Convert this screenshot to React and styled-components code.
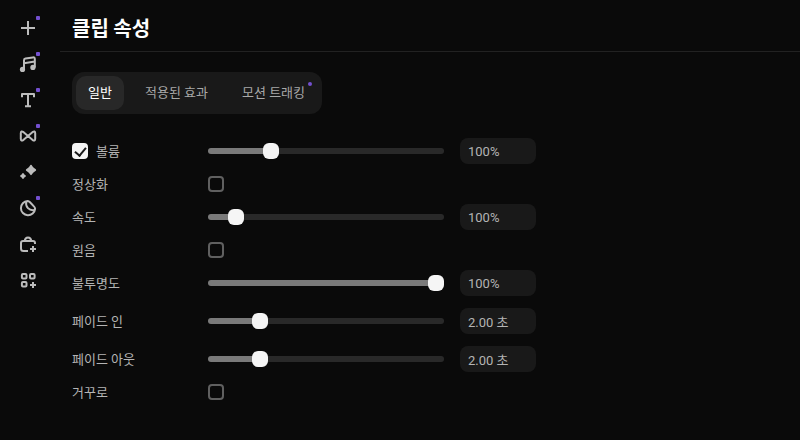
import { useState } from "react";
import styled, { createGlobalStyle } from "styled-components";

const GlobalStyle = createGlobalStyle`
	* {
		box-sizing: border-box;
	}
	body {
		margin: 0;
		background-color: #0a0a0a;
		color: #b4b4b4;
		font-family: Roboto, "Noto Sans CJK KR", sans-serif;
		font-size: 13px;
		line-height: 16px;
	}
	button,
	input {
		font: inherit;
		color: inherit;
	}
`;
const Page = styled.div`
	display: flex;
	min-height: 100vh;
`;
const Sidebar = styled.nav`
	display: flex;
	flex-direction: column;
	align-items: center;
	gap: 12px;
	flex: 0 0 60px;
	padding: 16px 4px 16px 0;
`;
const ToolButton = styled.button`
	position: relative;
	width: 24px;
	height: 24px;
	padding: 0;
	border: none;
	background: none;
	color: #bcbcbc;
	cursor: pointer;

	svg {
		display: block;
		width: 24px;
		height: 24px;
		fill: none;
		stroke: currentColor;
		stroke-width: 2;
		stroke-linejoin: round;
	}
	svg .solid {
		fill: currentColor;
		stroke: none;
	}
`;
const Dot = styled.span`
	position: absolute;
	top: ${(props) => props.$inset}px;
	right: ${(props) => props.$inset}px;
	width: 4px;
	height: 4px;
	border-radius: ${(props) => (props.$inset ? 2 : 1)}px;
	background-color: #7450d0;
`;
const Panel = styled.main`
	flex: 1;
	min-width: 0;
`;
const Header = styled.header`
	padding: 16px 12px 11px;
	border-bottom: 1px solid #222222;
`;
const Title = styled.h1`
	margin: 0;
	color: #ffffff;
	font-family: "Noto Sans CJK KR", sans-serif;
	font-size: 20px;
	font-weight: 700;
	line-height: 24px;
`;
const Content = styled.div`
	display: flex;
	flex-direction: column;
	align-items: flex-start;
	gap: 24px;
	padding: 20px 12px;
`;
const TabList = styled.div`
	display: flex;
	gap: 8px;
	padding: 4px;
	border-radius: 12px;
	background-color: #191919;
`;
const Tab = styled.button`
	position: relative;
	min-width: ${(props) => (props.$wide ? 89 : 48)}px;
	height: 34px;
	padding: 0 12px;
	border: none;
	border-radius: 10px;
	background-color: ${(props) => (props.$active ? "#282828" : "transparent")};
	color: ${(props) => (props.$active ? "#ffffff" : "#a8a8a8")};
	white-space: nowrap;
	cursor: pointer;
`;
const Rows = styled.div`
	display: flex;
	flex-direction: column;
	gap: 12px;
`;
const Row = styled.div`
	display: grid;
	grid-template-columns: 120px 236px 76px;
	align-items: center;
	column-gap: 16px;
`;
const LabelCell = styled.div`
	display: flex;
	align-items: center;
	gap: 8px;
	height: 16px;
`;
const Label = styled.label`
	padding-top: 2px;
`;
const Checkbox = styled.input`
	appearance: none;
	display: grid;
	place-items: center;
	width: 16px;
	height: 16px;
	margin: 0;
	border: 2px solid #606060;
	border-radius: 4px;
	cursor: pointer;

	&:checked {
		border-color: #f5f5f5;
		background-color: #f5f5f5;
	}
	&:checked::before {
		content: "";
		width: 5px;
		height: 9px;
		border-right: 2px solid #1a1a1a;
		border-bottom: 2px solid #1a1a1a;
		transform: translateY(-1px) rotate(40deg);
	}
`;
const Slider = styled.input`
	appearance: none;
	width: 100%;
	height: 16px;
	margin: 0;
	background: none;
	cursor: pointer;

	&::-webkit-slider-runnable-track {
		height: 6px;
		border-radius: 3px;
		background: linear-gradient(
			to right,
			#7a7a7a var(--fill),
			#292929 var(--fill)
		);
	}
	&::-webkit-slider-thumb {
		appearance: none;
		width: 16px;
		height: 16px;
		margin-top: -5px;
		border-radius: 6px;
		background-color: #f5f5f5;
	}
`;
const ValueBox = styled.input`
	width: 100%;
	height: 26px;
	padding: 0 8px;
	border: none;
	border-radius: 8px;
	background-color: #191919;
`;

const tools = [
	{
		name: "추가",
		dot: true,
		icon: <path d="M12 5v14M5 12h14" />,
	},
	{
		name: "음악",
		dot: true,
		icon: (
			<>
				<path d="M8 17.5V8.2Q8 6.6 9.5 6.4L16.8 5.4Q18.8 5.1 18.8 7V15.5M8 11.2L18.8 9.6" />
				<circle className="solid" cx="6.5" cy="17.4" r="2.6" />
				<circle className="solid" cx="16.9" cy="15.4" r="2.6" />
			</>
		),
	},
	{
		name: "텍스트",
		dot: true,
		icon: <path d="M6 9.2V6h12v3.2M12 6v12M9 18.2h6" />,
	},
	{
		name: "전환",
		dot: true,
		icon: (
			<path d="M12 12L7.6 8.2Q4.8 6.4 4.8 9.2V14.8Q4.8 17.6 7.6 15.8L16.4 8.2Q19.2 6.4 19.2 9.2V14.8Q19.2 17.6 16.4 15.8Z" />
		),
	},
	{
		name: "효과",
		dot: false,
		icon: (
			<>
				<path
					className="solid"
					d="M15 4.8Q15.6 4.8 16.4 6.2Q17.3 7.7 18.8 8.6Q20.2 9.4 20.2 10T18.8 11.4Q17.3 12.3 16.4 13.8Q15.6 15.2 15 15.2T13.6 13.8Q12.7 12.3 11.2 11.4Q9.8 10.6 9.8 10T11.2 8.6Q12.7 7.7 13.6 6.2Q14.4 4.8 15 4.8Z"
				/>
				<path
					className="solid"
					d="M7 13Q7.6 13 8 14Q8.4 14.6 9 15Q10 15.4 10 16T9 17Q8.4 17.4 8 18Q7.6 19 7 19T6 18Q5.6 17.4 5 17Q4 16.6 4 16T5 15Q5.6 14.6 6 14Q6.4 13 7 13Z"
				/>
			</>
		),
	},
	{
		name: "스티커",
		dot: true,
		icon: (
			<>
				<path d="M11.6 5A7.1 7.1 0 1 0 19.1 12.8Q19 11.5 17.9 10.4L14 6.3Q12.9 5.2 11.6 5Z" />
				<path d="M10.2 5.4C9.2 10.8 13 15.2 18.8 14.1" />
			</>
		),
	},
	{
		name: "스토어",
		dot: false,
		icon: (
			<>
				<path d="M12 19H7.5Q5 19 5 16.5V11Q5 9 7 9H17Q19 9 19 11V12" />
				<path d="M8.8 9Q9 5.4 12 5.4T15.2 9" />
				<path d="M17 14v6M14 17h6" />
			</>
		),
	},
	{
		name: "더보기",
		dot: false,
		icon: (
			<>
				<rect x="5.9" y="6" width="4.6" height="4.6" rx="1" />
				<rect x="14" y="6" width="4.6" height="4.6" rx="1" />
				<rect x="5.9" y="14" width="4.6" height="4.6" rx="1" />
				<path d="M17 14v6M14 17h6" />
			</>
		),
	},
];

const tabs = [
	{ label: "일반" },
	{ label: "적용된 효과", wide: true },
	{ label: "모션 트래킹", wide: true, dot: true },
];

const properties = [
	{ id: "volume", label: "볼륨", toggle: true, max: 400, level: 100, text: "100%" },
	{ id: "normalize", label: "정상화" },
	{ id: "speed", label: "속도", max: 1100, level: 100, text: "100%" },
	{ id: "pitch", label: "원음" },
	{ id: "opacity", label: "불투명도", max: 100, level: 100, text: "100%" },
	{ id: "fade-in", label: "페이드 인", max: 10, level: 2, text: "2.00 초" },
	{ id: "fade-out", label: "페이드 아웃", max: 10, level: 2, text: "2.00 초" },
	{ id: "reverse", label: "거꾸로" },
];

function SliderRow({ id, label, toggle, max, level, text }) {
	const [value, setValue] = useState(level);

	return (
		<Row>
			<LabelCell>
				{toggle && (
					<Checkbox
						type="checkbox"
						defaultChecked
						aria-labelledby={`${id}-label`}
					/>
				)}
				<Label id={`${id}-label`} htmlFor={id}>
					{label}
				</Label>
			</LabelCell>
			<Slider
				id={id}
				type="range"
				min="0"
				max={max}
				value={value}
				onChange={(e) => setValue(Number(e.target.value))}
				style={{ "--fill": `${(value / max) * 100}%` }}
			/>
			<ValueBox type="text" defaultValue={text} aria-labelledby={`${id}-label`} />
		</Row>
	);
}

function CheckRow({ id, label }) {
	return (
		<Row>
			<LabelCell>
				<Label htmlFor={id}>{label}</Label>
			</LabelCell>
			<Checkbox id={id} type="checkbox" />
		</Row>
	);
}

export default function App() {
	const [active, setActive] = useState(0);

	return (
		<>
			<GlobalStyle />
			<Page>
				<Sidebar>
					{tools.map((tool) => (
						<ToolButton key={tool.name} type="button" aria-label={tool.name}>
							<svg viewBox="0 0 24 24">{tool.icon}</svg>
							{tool.dot && <Dot $inset={0} />}
						</ToolButton>
					))}
				</Sidebar>
				<Panel>
					<Header>
						<Title>클립 속성</Title>
					</Header>
					<Content>
						<TabList role="tablist">
							{tabs.map((tab, i) => (
								<Tab
									key={tab.label}
									type="button"
									role="tab"
									aria-selected={i === active}
									$active={i === active}
									$wide={tab.wide}
									onClick={() => setActive(i)}
								>
									{tab.label}
									{tab.dot && <Dot $inset={6} />}
								</Tab>
							))}
						</TabList>
						<Rows>
							{properties.map((item) =>
								item.text ? (
									<SliderRow key={item.id} {...item} />
								) : (
									<CheckRow key={item.id} {...item} />
								)
							)}
						</Rows>
					</Content>
				</Panel>
			</Page>
		</>
	);
}
